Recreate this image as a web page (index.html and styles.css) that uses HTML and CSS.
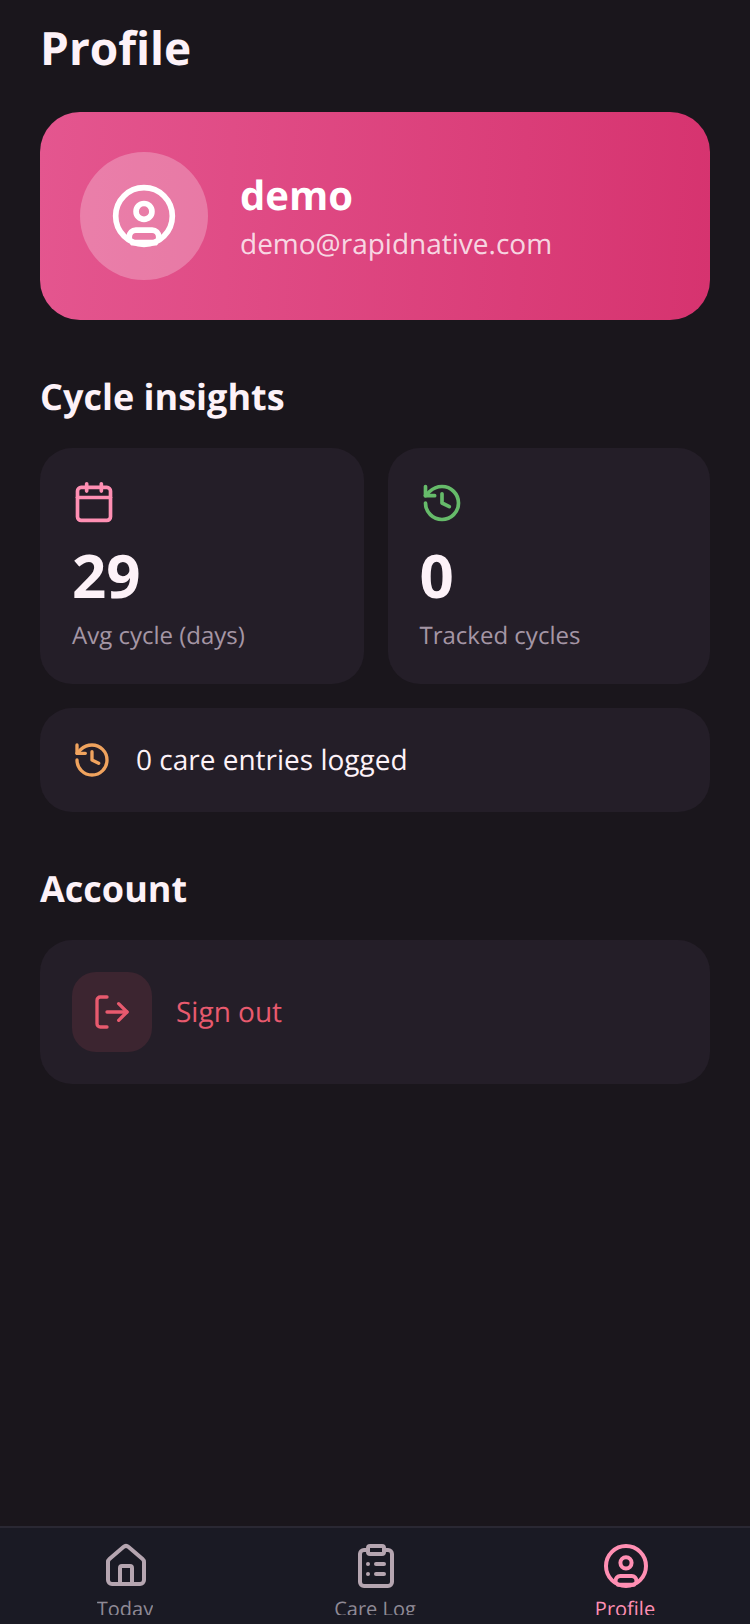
FILE: index.html
```html
<!DOCTYPE html>
<html>
  <head>
    <title>Profile</title>
    <link rel="stylesheet" href="styles.css">
  </head>
  <body>
    <main class="content">
      <h1 class="page-title">Profile</h1>

      <section class="user-card">
        <div class="avatar">
          <svg class="icon icon-avatar" viewBox="0 0 24 24">
            <circle cx="12" cy="12" r="10"/>
            <circle cx="12" cy="10.4" r="2.8"/>
            <path d="M6.8 20.3v-1a2.3 2.3 0 0 1 2.3-2.3h5.8a2.3 2.3 0 0 1 2.3 2.3v1"/>
            <path d="M8 21.4h8"/>
          </svg>
        </div>
        <div class="user-text">
          <div class="user-name">demo</div>
          <div class="user-email">demo@rapidnative.com</div>
        </div>
      </section>

      <h2 class="section-title">Cycle insights</h2>
      <div class="stats">
        <div class="stat-card">
          <svg class="icon icon-stat pink" viewBox="0 0 24 24">
            <path d="M8 1.5v4"/>
            <path d="M16 1.5v4"/>
            <rect x="3" y="3.5" width="18" height="18" rx="2"/>
            <path d="M3 9h18"/>
          </svg>
          <div class="stat-value">29</div>
          <div class="stat-label">Avg cycle (days)</div>
        </div>
        <div class="stat-card">
          <svg class="icon icon-stat green" viewBox="0 0 24 24">
            <path d="M3 12a9 9 0 1 0 9-9 9.75 9.75 0 0 0-6.74 2.74L3 8"/>
            <path d="M3 3v5h5"/>
            <path d="M12 7v5l4 2"/>
          </svg>
          <div class="stat-value">0</div>
          <div class="stat-label">Tracked cycles</div>
        </div>
      </div>

      <div class="care-row">
        <svg class="icon icon-row orange" viewBox="0 0 24 24">
          <path d="M3 12a9 9 0 1 0 9-9 9.75 9.75 0 0 0-6.74 2.74L3 8"/>
          <path d="M3 3v5h5"/>
          <path d="M12 7v5l4 2"/>
        </svg>
        <span class="care-text">0 care entries logged</span>
      </div>

      <h2 class="section-title">Account</h2>
      <div class="account-card">
        <div class="signout-icon">
          <svg class="icon icon-row red" viewBox="0 0 24 24">
            <path d="M9 21H5a2 2 0 0 1-2-2V5a2 2 0 0 1 2-2h4"/>
            <path d="m16 17 5-5-5-5"/>
            <path d="M21 12H9"/>
          </svg>
        </div>
        <span class="signout-text">Sign out</span>
      </div>
    </main>

    <nav class="tabbar">
      <div class="tab">
        <svg class="icon icon-tab" viewBox="0 0 24 24">
          <path d="M15 21v-8a1 1 0 0 0-1-1h-4a1 1 0 0 0-1 1v8"/>
          <path d="M3 10a2 2 0 0 1 .709-1.528l7-5.999a2 2 0 0 1 2.582 0l7 5.999A2 2 0 0 1 21 10v9a2 2 0 0 1-2 2H5a2 2 0 0 1-2-2z"/>
        </svg>
        <div class="tab-label">Today</div>
      </div>
      <div class="tab">
        <svg class="icon icon-tab" viewBox="0 0 24 24">
          <rect x="8" y="2" width="8" height="4" rx="1"/>
          <path d="M16 4h2a2 2 0 0 1 2 2v14a2 2 0 0 1-2 2H6a2 2 0 0 1-2-2V6a2 2 0 0 1 2-2h2"/>
          <path d="M12 11h4"/>
          <path d="M12 16h4"/>
          <path d="M8 11h.01"/>
          <path d="M8 16h.01"/>
        </svg>
        <div class="tab-label">Care Log</div>
      </div>
      <div class="tab active">
        <svg class="icon icon-tab" viewBox="0 0 24 24">
          <circle cx="12" cy="12" r="10"/>
          <circle cx="12" cy="10.4" r="2.8"/>
          <path d="M6.8 20.3v-1a2.3 2.3 0 0 1 2.3-2.3h5.8a2.3 2.3 0 0 1 2.3 2.3v1"/>
          <path d="M8 21.4h8"/>
        </svg>
        <div class="tab-label">Profile</div>
      </div>
    </nav>
  </body>
</html>
```

FILE: styles.css
```css
* {
  box-sizing: border-box;
}
body {
  display: flex;
  flex-direction: column;
  height: 100vh;
  margin: 0;
  overflow: hidden;
  background-color: #1a161c;
  color: #fdf2f8;
  font-family: "Open Sans", sans-serif;
  text-rendering: geometricPrecision;
}
.icon {
  display: block;
  flex: none;
  fill: none;
  stroke: currentColor;
  stroke-width: 2;
  stroke-linecap: round;
  stroke-linejoin: round;
}
.icon-avatar {
  width: 68px;
  height: 68px;
  color: #ffffff;
}
.icon-stat {
  width: 44px;
  height: 44px;
  margin-top: 1px;
}
.icon-row {
  width: 40px;
  height: 40px;
}
.icon-tab {
  width: 48px;
  height: 48px;
  margin-left: 2px;
}
.pink {
  color: #ff8fb3;
}
.green {
  color: #66bb6a;
}
.orange {
  color: #f0a35e;
}
.red {
  color: #e85a6e;
}

.content {
  flex: 1;
  padding: 16px 40px 0;
}
.page-title {
  margin: 0 0 32px;
  font-size: 46px;
  line-height: 64px;
  font-weight: 700;
}
.user-card {
  display: flex;
  align-items: center;
  gap: 32px;
  height: 208px;
  padding: 40px;
  border-radius: 40px;
  background: linear-gradient(93deg, #e4568f, #d6336f);
}
.avatar {
  display: flex;
  align-items: center;
  justify-content: center;
  width: 128px;
  height: 128px;
  border-radius: 50%;
  background-color: rgba(255, 255, 255, 0.25);
}
.user-text {
  padding-bottom: 2px;
}
.user-name {
  font-size: 40px;
  line-height: 55px;
  font-weight: 700;
  color: #ffffff;
}
.user-email {
  margin-top: 2px;
  font-size: 28px;
  line-height: 40px;
  color: rgba(255, 255, 255, 0.8);
}
.section-title {
  margin: 53px 0 27px;
  font-size: 36px;
  line-height: 48px;
  font-weight: 700;
}
.stats {
  display: grid;
  grid-template-columns: 323.5px 322.5px;
  gap: 24px;
  margin-bottom: 24px;
}
.stat-card {
  height: 236px;
  padding: 32px;
  border-radius: 32px;
  background-color: #241e28;
}
.stat-value {
  margin-top: 12px;
  font-size: 60px;
  line-height: 76px;
  font-weight: 700;
}
.stat-label {
  margin-top: 5px;
  font-size: 24px;
  line-height: 36px;
  color: #a596a5;
}
.care-row {
  display: flex;
  align-items: center;
  gap: 24px;
  height: 104px;
  padding: 0 32px;
  border-radius: 32px;
  background-color: #241e28;
}
.care-text {
  font-size: 28px;
  color: #fdf2f8;
}
.account-card {
  display: flex;
  align-items: center;
  gap: 24px;
  height: 144px;
  padding: 0 32px;
  border-radius: 32px;
  background-color: #241e28;
}
.signout-icon {
  display: flex;
  align-items: center;
  justify-content: center;
  width: 80px;
  height: 80px;
  border-radius: 24px;
  background-color: #3c2530;
}
.signout-text {
  font-size: 28px;
  color: #e85a6e;
}

.tabbar {
  display: flex;
  height: 98px;
  padding-top: 14px;
  border-top: 2px solid #2a2833;
  background-color: #1a1a24;
}
.tab {
  display: flex;
  flex: 1;
  flex-direction: column;
  align-items: center;
  color: #b5a5b0;
}
.tab.active {
  color: #ff8fb3;
}
.tab-label {
  height: 24px;
  margin-top: 1px;
  padding-top: 4px;
  overflow: hidden;
  font-size: 20px;
  line-height: 28px;
  color: #8f8a96;
}
.tab.active .tab-label {
  color: #ff8fb3;
}
```
